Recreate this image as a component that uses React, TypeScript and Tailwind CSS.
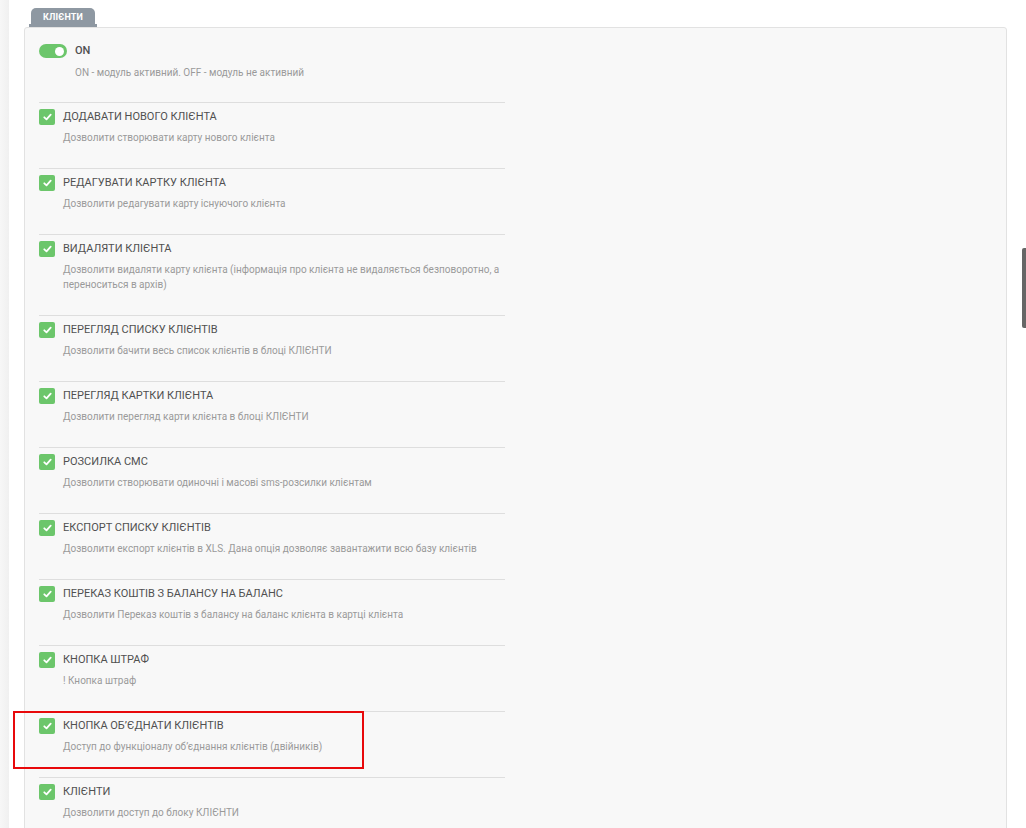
import React, { FunctionComponent } from 'react';

interface Permission {
  title: string;
  description: string;
  highlighted?: boolean;
}

const permissions: Permission[] = [
  { title: 'Додавати нового клієнта', description: 'Дозволити створювати карту нового клієнта' },
  { title: 'Редагувати картку клієнта', description: 'Дозволити редагувати карту існуючого клієнта' },
  {
    title: 'Видаляти клієнта',
    description:
      'Дозволити видаляти карту клієнта (інформація про клієнта не видаляється безповоротно, а переноситься в архів)',
  },
  { title: 'Перегляд списку клієнтів', description: 'Дозволити бачити весь список клієнтів в блоці КЛІЄНТИ' },
  { title: 'Перегляд картки клієнта', description: 'Дозволити перегляд карти клієнта в блоці КЛІЄНТИ' },
  { title: 'Розсилка СМС', description: 'Дозволити створювати одиночні і масові sms-розсилки клієнтам' },
  {
    title: 'Експорт списку клієнтів',
    description: 'Дозволити експорт клієнтів в XLS. Дана опція дозволяє завантажити всю базу клієнтів',
  },
  {
    title: 'Переказ коштів з балансу на баланс',
    description: 'Дозволити Переказ коштів з балансу на баланс клієнта в картці клієнта',
  },
  { title: 'Кнопка штраф', description: '! Кнопка штраф' },
  {
    title: 'Кнопка об’єднати клієнтів',
    description: 'Доступ до функціоналу об’єднання клієнтів (двійників)',
    highlighted: true,
  },
  { title: 'Клієнти', description: 'Дозволити доступ до блоку КЛІЄНТИ' },
];

const CheckBox: FunctionComponent = () => (
  <div className="flex h-4 w-4 shrink-0 items-center justify-center rounded-[2px] bg-[#6cc66b]">
    <svg width="9" height="8" viewBox="0 0 9 8" fill="none">
      <path d="M1.3 4.3 L3.5 6.3 L7.7 1.6" stroke="#fff" strokeWidth="1.8" strokeLinecap="round" strokeLinejoin="round" />
    </svg>
  </div>
);

const PermissionRow: FunctionComponent<Permission> = ({ title, description, highlighted }) => (
  <div className="relative w-[466px] border-t border-[#dedede] pt-[6px] pb-[23px]">
    {highlighted && (
      <div className="absolute left-[-26px] top-[-1px] h-[58px] w-[351px] border-2 border-[#e8090b]" />
    )}
    <div className="flex">
      <CheckBox />
      <div className="ml-[8px] flex-1">
        <div className="text-[11px] uppercase leading-4 text-[#505050]">{title}</div>
        <div className="mt-[5px] text-[10px] leading-[15px] text-[#9a9a9a]">{description}</div>
      </div>
    </div>
  </div>
);

const App: FunctionComponent = () => {
  return (
    <div
      className="relative flex h-[828px] overflow-hidden bg-white"
      style={{ fontFamily: 'Roboto, "Noto Sans", sans-serif' }}
    >
      <div className="w-[9px] shrink-0 bg-gradient-to-r from-[#f7f7f7] to-[#f0f0f0]" />
      <div className="flex flex-1 flex-col pl-[15px] pr-[19px] pt-[8px]">
        <div className="relative ml-[7px] flex h-[19px] w-[64px] shrink-0 items-center justify-center rounded-t-[5px] bg-[#8e98a2]">
          <span className="absolute bottom-0 left-[-2px] h-[3px] w-[3px] bg-[#8e98a2]" />
          <span className="absolute bottom-0 right-[-2px] h-[3px] w-[3px] bg-[#8e98a2]" />
          <span className="text-[9px] font-bold tracking-[0.2px] text-white">КЛІЄНТИ</span>
        </div>
        <div className="shrink-0 rounded-[3px] border border-[#e2e2e2] bg-[#f8f8f8] pb-[40px] pl-[14px] pt-[15px]">
          <div className="pb-[22px]">
            <div className="flex items-center">
              <div className="flex h-[14px] w-[28px] items-center justify-end rounded-full bg-[#6cc66b] pr-[3px]">
                <div className="h-[9px] w-[9px] rounded-full bg-white" />
              </div>
              <span className="ml-[8px] text-[11px] font-medium leading-4 text-[#505050]">ON</span>
            </div>
            <div className="ml-[36px] mt-[6px] text-[10px] leading-[15px] text-[#9a9a9a]">
              ON - модуль активний. OFF - модуль не активний
            </div>
          </div>
          {permissions.map((p) => (
            <PermissionRow key={p.title} {...p} />
          ))}
        </div>
      </div>
      <div className="absolute right-0 top-[248px] h-[80px] w-[4px] rounded-l-[2px] bg-[#666]" />
    </div>
  );
};

export default App;
